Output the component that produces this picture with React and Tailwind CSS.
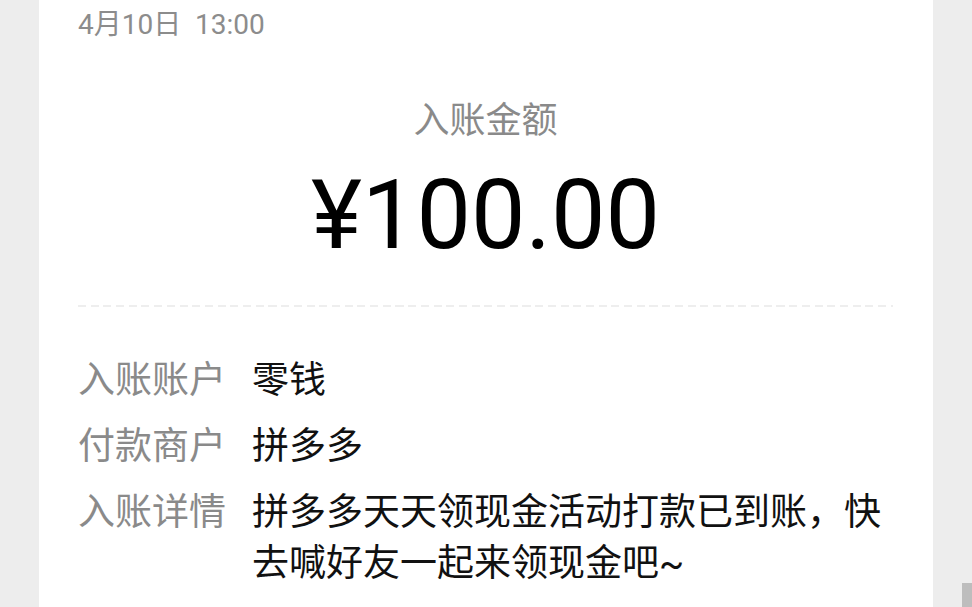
import React from 'react'

const cjk = { fontFamily: 'Roboto, "Noto Sans CJK SC", sans-serif' }

function Row({ label, children }) {
  return (
    <div className="flex">
      <div className="w-[174px] shrink-0 text-[#8a8a8a]">{label}</div>
      <div className="flex-1 text-[#111]">{children}</div>
    </div>
  )
}

export default function App() {
  return (
    <div className="flex h-[607px] w-[972px] overflow-hidden bg-[#ededed]" style={cjk}>
      <div className="w-[39px] shrink-0" />

      {/* Card */}
      <div className="flex w-[894px] shrink-0 flex-col bg-white pl-[39px] pr-[40px]">
        <div className="mt-[5px] whitespace-pre text-[28px] leading-[40px] text-[#8c8c8c]">4月10日  13:00</div>

        <div className="mt-[54px] text-center text-[36px] leading-[44px] text-[#8a8a8a]">入账金额</div>
        <div className="mt-[24px] text-center text-[97px] leading-[97px] text-black">¥100.00</div>

        {/* Dashed divider */}
        <div className="mt-[41px] h-[2px] bg-[repeating-linear-gradient(to_right,#eeeeee_0_8px,transparent_8px_12.7px)]" />

        <div className="mt-[48px] flex flex-col gap-[15px] text-[37px] leading-[51px]">
          <Row label="入账账户">零钱</Row>
          <Row label="付款商户">拼多多</Row>
          <Row label="入账详情">拼多多天天领现金活动打款已到账，快去喊好友一起来领现金吧~</Row>
        </div>
      </div>

      {/* Right gutter with scroll thumb */}
      <div className="flex flex-1 flex-col items-end justify-end">
        <div className="h-[24px] w-[10px] bg-[#bdbdbd]" />
      </div>
    </div>
  )
}
